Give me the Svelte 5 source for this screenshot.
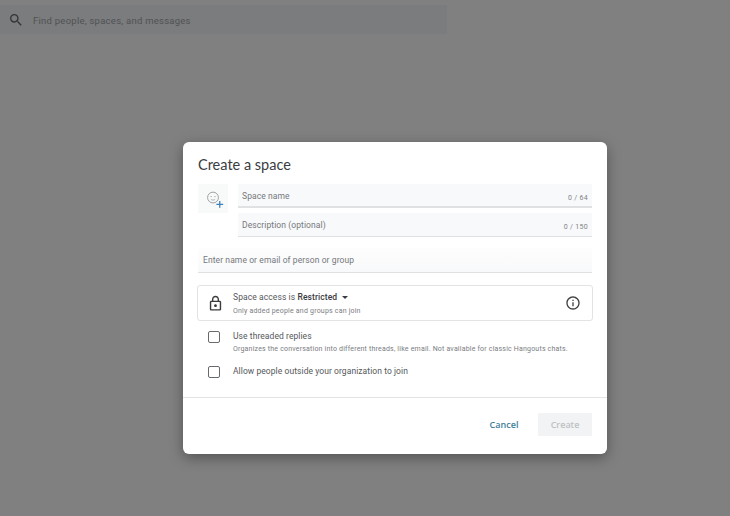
<script lang="ts">
    const options = [
        {
            label: "Use threaded replies",
            hint: "Organizes the conversation into different threads, like email. Not available for classic Hangouts chats.",
        },
        { label: "Allow people outside your organization to join", hint: "" },
    ];
</script>

<div class="page">
    <div class="search">
        <svg class="search-icon" viewBox="0 0 24 24" width="16" height="16">
            <path d="M15.5 14h-.79l-.28-.27A6.47 6.47 0 0 0 16 9.5 6.5 6.5 0 1 0 9.5 16c1.61 0 3.09-.59 4.23-1.57l.27.28v.79l5 4.99L20.49 19l-4.99-5zm-6 0C7.01 14 5 11.99 5 9.5S7.01 5 9.5 5 14 7.01 14 9.5 11.99 14 9.5 14z" />
        </svg>
        <span>Find people, spaces, and messages</span>
    </div>

    <div class="overlay">
        <div class="dialog">
            <h1>Create a space</h1>

            <div class="name-row">
                <div class="emoji">
                    <svg viewBox="0 0 30 30" width="30" height="29" fill="none">
                        <circle cx="15" cy="14" r="5.6" stroke="#9a9da0" stroke-width="1" />
                        <circle cx="13" cy="13" r="0.7" fill="#9a9da0" />
                        <circle cx="17" cy="13" r="0.7" fill="#9a9da0" />
                        <path d="M12.8 15.9c1.2 1 3.2 1 4.4 0" stroke="#9a9da0" stroke-width="0.8" />
                        <path d="M22 17.5v7M18.5 21h7" stroke="#3b7fb8" stroke-width="1.3" />
                    </svg>
                </div>
                <div class="fields">
                    <div class="field name">
                        <span>Space name</span>
                        <small>0 / 64</small>
                    </div>
                    <div class="field description">
                        <span>Description (optional)</span>
                        <small>0 / 150</small>
                    </div>
                </div>
            </div>

            <div class="field people">
                <span>Enter name or email of person or group</span>
            </div>

            <div class="access">
                <svg class="lock" viewBox="0 0 24 24" width="17" height="17">
                    <path d="M18 8h-1V6c0-2.76-2.24-5-5-5S7 3.24 7 6v2H6c-1.1 0-2 .9-2 2v10c0 1.1.9 2 2 2h12c1.1 0 2-.9 2-2V10c0-1.1-.9-2-2-2zM9 6c0-1.66 1.34-3 3-3s3 1.34 3 3v2H9V6zm9 14H6V10h12v10zm-6-3c1.1 0 2-.9 2-2s-.9-2-2-2-2 .9-2 2 .9 2 2 2z" />
                </svg>
                <div class="access-text">
                    <div class="access-title">
                        Space access is <b>Restricted</b>
                        <i class="caret"></i>
                    </div>
                    <div class="access-hint">Only added people and groups can join</div>
                </div>
                <svg class="info" viewBox="0 0 24 24" width="16" height="16">
                    <path d="M11 7h2v2h-2zm0 4h2v6h-2zm1-9C6.48 2 2 6.48 2 12s4.48 10 10 10 10-4.48 10-10S17.52 2 12 2zm0 18c-4.41 0-8-3.59-8-8s3.59-8 8-8 8 3.59 8 8-3.59 8-8 8z" />
                </svg>
            </div>

            <div class="options">
                {#each options as option}
                    <div class="option">
                        <span class="box"></span>
                        <div>
                            <div class="option-label">{option.label}</div>
                            {#if option.hint}
                                <div class="option-hint">{option.hint}</div>
                            {/if}
                        </div>
                    </div>
                {/each}
            </div>

            <div class="footer">
                <button class="cancel">Cancel</button>
                <button class="create" disabled>Create</button>
            </div>
        </div>
    </div>
</div>

<style>
    :global(body) {
        margin: 0;
        background: #808080;
    }

    .page {
        width: 730px;
        height: 516px;
        overflow: hidden;
        display: flex;
        flex-direction: column;
        font-family: Roboto, "Liberation Sans", sans-serif;
    }

    .search {
        flex: none;
        box-sizing: border-box;
        width: 447px;
        height: 29px;
        margin-top: 5px;
        padding: 0 0 0 8px;
        display: flex;
        align-items: center;
        gap: 9px;
        background: #7a7c7d;
        font-size: 9.5px;
        letter-spacing: 0.25px;
        color: #505254;
    }

    .search span {
        margin-top: 2px;
    }

    .search-icon {
        fill: #333537;
    }

    .overlay {
        flex: 1;
        padding: 108px 0 0 183px;
    }

    .dialog {
        box-sizing: border-box;
        width: 424px;
        height: 312px;
        padding: 0 15px;
        display: flex;
        flex-direction: column;
        background: #fff;
        border-radius: 6px;
        box-shadow: 0 4px 14px rgba(0, 0, 0, 0.35);
    }

    h1 {
        margin: 0;
        flex: none;
        height: 42px;
        padding-top: 14px;
        box-sizing: border-box;
        font-family: Lato, sans-serif;
        font-size: 14.5px;
        line-height: 18px;
        font-weight: 400;
        color: #3a3c3f;
    }

    .name-row {
        flex: none;
        display: flex;
        gap: 10px;
    }

    .emoji {
        flex: none;
        width: 30px;
        height: 29px;
        background: #f8f9f9;
    }

    .fields {
        flex: 1;
        display: flex;
        flex-direction: column;
        gap: 5px;
    }

    .field {
        flex: none;
        box-sizing: border-box;
        display: flex;
        align-items: center;
        justify-content: space-between;
        padding: 0 4px 0 4px;
        background: #f8f9fa;
        border-bottom: 1px solid #dfe1e3;
        font-size: 8.5px;
        color: #75787c;
    }

    .field span {
        letter-spacing: 0.09px;
    }

    .field small {
        margin-top: 4px;
        font-size: 7px;
        letter-spacing: 0.3px;
        color: #7f8286;
    }

    .name {
        height: 24px;
        border-bottom-width: 2px;
    }

    .name span {
        margin-top: 1px;
    }

    .name small {
        margin-top: 5px;
    }

    .description {
        height: 24px;
    }

    .people {
        height: 25px;
        margin-top: 11px;
        padding-left: 5px;
        background: linear-gradient(#fdfdfd, #f8f9fa);
    }

    .access {
        flex: none;
        box-sizing: border-box;
        height: 36px;
        margin: 12px -1px 0;
        padding: 0 11px 0 9px;
        display: flex;
        align-items: center;
        border: 1px solid #e2e3e5;
        border-radius: 3px;
    }

    .lock {
        fill: #3a3c3f;
    }

    .info {
        fill: #3f4144;
    }

    .access-text {
        flex: 1;
        margin-left: 9px;
    }

    .access-title {
        font-size: 8.5px;
        line-height: 14px;
        letter-spacing: 0.09px;
        color: #55585b;
    }

    .access-title b {
        font-weight: 500;
        color: #3a3c3f;
    }

    .caret {
        display: inline-block;
        margin: 0 0 1px 3px;
        border: 3px solid transparent;
        border-top: 3.5px solid #3a3c3f;
        border-bottom: 0;
    }

    .access-hint {
        margin-top: 2px;
        font-size: 7px;
        line-height: 11px;
        letter-spacing: 0.2px;
        color: #7a7d81;
    }

    .options {
        flex: 1;
        padding: 8px 0 0 10px;
    }

    .option {
        display: flex;
        gap: 13px;
        margin-bottom: 9px;
    }

    .box {
        flex: none;
        box-sizing: border-box;
        width: 12px;
        height: 12px;
        margin-top: 2px;
        border: 1.5px solid #66696d;
        border-radius: 2px;
    }

    .option-label {
        font-size: 8.5px;
        line-height: 14px;
        letter-spacing: 0.07px;
        color: #55585b;
    }

    .option-hint {
        margin-top: 1px;
        font-size: 7px;
        line-height: 11px;
        letter-spacing: 0.19px;
        color: #7a7d81;
    }

    .footer {
        flex: none;
        height: 57px;
        margin: 0 -15px;
        padding: 15px 15px 0;
        box-sizing: border-box;
        display: flex;
        justify-content: flex-end;
        align-items: flex-start;
        gap: 17px;
        border-top: 1px solid #e3e4e6;
    }

    button {
        height: 23px;
        border: 0;
        padding: 0;
        background: none;
        font-family: "Open Sans", sans-serif;
        font-size: 9px;
        font-weight: 600;
    }

    .cancel {
        width: 34px;
        color: #3f8099;
    }

    .create {
        width: 54px;
        background: #f1f3f4;
        color: #bfc1c3;
    }
</style>
